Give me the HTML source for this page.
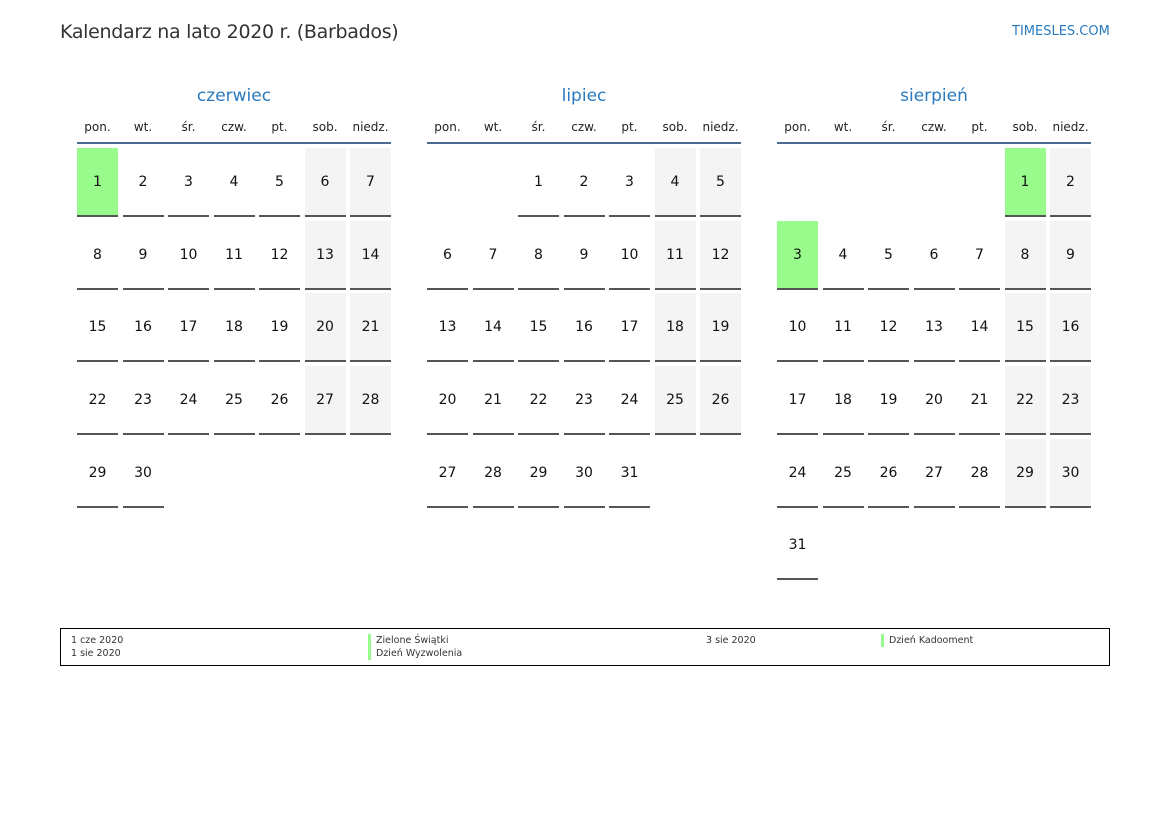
<!DOCTYPE html><html><head><meta charset="utf-8"><style>
body{margin:0;width:1169px;height:827px;background:#fff;font-family:"DejaVu Sans","Liberation Sans",sans-serif;position:relative;overflow:hidden}
.t{position:absolute;left:60px;top:21px;font-size:19px;color:#333;letter-spacing:-0.3px}
.s{position:absolute;left:1012px;top:24px;font-size:13px;color:#2a7ac0}
.m{position:absolute;top:84px;width:314px}
.mt{text-align:center;font-size:17px;color:#2a7ac0;height:24px;line-height:24px}
.dn{display:grid;grid-template-columns:repeat(7,41px);column-gap:4.5px;font-size:12px;text-align:center;margin-top:12px;height:22px;line-height:14px;color:#222;border-bottom:2px solid #4a6a90;width:314px}
.g{display:grid;grid-template-columns:repeat(7,41px);column-gap:4.5px;row-gap:3.7px;margin-top:4px}
.g b,.g i{height:67px;display:block}
.g b{font-weight:normal;border-bottom:2px solid #555;text-align:center;line-height:69px;font-size:14px;color:#111}
.g b.w{background:#f4f4f4}.g b.h{background:#98fb8b}
.lg{position:absolute;left:60px;top:628px;width:1048px;height:36px;border:1px solid #000;font-size:9.5px;color:#333}
.lg div{position:absolute;line-height:13px}
.bar{border-left:3px solid #98fb8b;padding-left:5px}
</style></head><body>
<div class="t">Kalendarz na lato 2020 r. (Barbados)</div>
<div class="s">TIMESLES.COM</div>

<div class="m" style="left:77px"><div class="mt">czerwiec</div>
<div class="dn"><span>pon.</span><span>wt.</span><span>śr.</span><span>czw.</span><span>pt.</span><span>sob.</span><span>niedz.</span></div>
<div class="g">
<b class="h">1</b><b>2</b><b>3</b><b>4</b><b>5</b><b class="w">6</b><b class="w">7</b>
<b>8</b><b>9</b><b>10</b><b>11</b><b>12</b><b class="w">13</b><b class="w">14</b>
<b>15</b><b>16</b><b>17</b><b>18</b><b>19</b><b class="w">20</b><b class="w">21</b>
<b>22</b><b>23</b><b>24</b><b>25</b><b>26</b><b class="w">27</b><b class="w">28</b>
<b>29</b><b>30</b>
</div></div>

<div class="m" style="left:427px"><div class="mt">lipiec</div>
<div class="dn"><span>pon.</span><span>wt.</span><span>śr.</span><span>czw.</span><span>pt.</span><span>sob.</span><span>niedz.</span></div>
<div class="g">
<i></i><i></i><b>1</b><b>2</b><b>3</b><b class="w">4</b><b class="w">5</b>
<b>6</b><b>7</b><b>8</b><b>9</b><b>10</b><b class="w">11</b><b class="w">12</b>
<b>13</b><b>14</b><b>15</b><b>16</b><b>17</b><b class="w">18</b><b class="w">19</b>
<b>20</b><b>21</b><b>22</b><b>23</b><b>24</b><b class="w">25</b><b class="w">26</b>
<b>27</b><b>28</b><b>29</b><b>30</b><b>31</b>
</div></div>

<div class="m" style="left:777px"><div class="mt">sierpień</div>
<div class="dn"><span>pon.</span><span>wt.</span><span>śr.</span><span>czw.</span><span>pt.</span><span>sob.</span><span>niedz.</span></div>
<div class="g">
<i></i><i></i><i></i><i></i><i></i><b class="h">1</b><b class="w">2</b>
<b class="h">3</b><b>4</b><b>5</b><b>6</b><b>7</b><b class="w">8</b><b class="w">9</b>
<b>10</b><b>11</b><b>12</b><b>13</b><b>14</b><b class="w">15</b><b class="w">16</b>
<b>17</b><b>18</b><b>19</b><b>20</b><b>21</b><b class="w">22</b><b class="w">23</b>
<b>24</b><b>25</b><b>26</b><b>27</b><b>28</b><b class="w">29</b><b class="w">30</b>
<b>31</b>
</div></div>

<div class="lg">
<div style="left:10px;top:5px">1 cze 2020<br>1 sie 2020</div>
<div class="bar" style="left:307px;top:5px">Zielone Świątki<br>Dzień Wyzwolenia</div>
<div style="left:645px;top:5px">3 sie 2020</div>
<div class="bar" style="left:820px;top:5px">Dzień Kadooment</div>
</div>
</body></html>
